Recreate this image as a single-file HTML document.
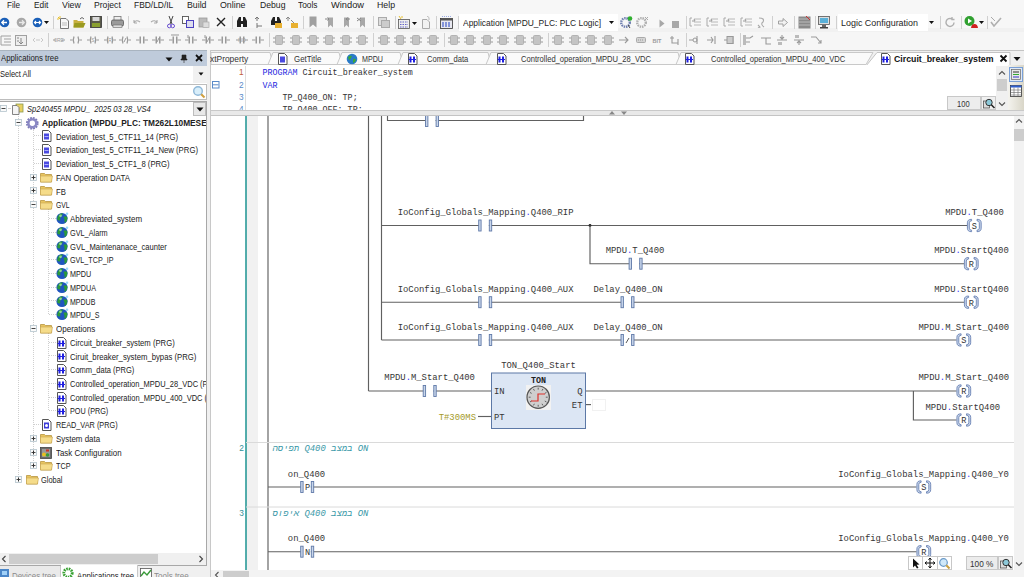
<!DOCTYPE html>
<html><head><meta charset="utf-8">
<style>
*{margin:0;padding:0;box-sizing:border-box}
html,body{width:1024px;height:577px;overflow:hidden;background:#f0f0f0;font-family:"Liberation Sans",sans-serif;font-size:8px;color:#1e1e1e;position:relative}
.a{position:absolute}
.t{position:absolute;white-space:pre;line-height:10px}
.m{font-family:"Liberation Mono",monospace}
.tr{font-size:9px;color:#222}
.it{font-style:italic}
.bd{font-weight:bold}
.tb{font-size:9px;color:#333}
.dc{font-size:8.35px;color:#333}
.mn{top:0px;font-size:9px;color:#222}
</style></head><body>
<!-- MENU -->
<div class="a" style="left:0;top:0;width:1024px;height:12px;background:#f7f7f7"></div>
<span id="mn0" class="t mn" style="left:7.3999999999999995px;transform:scaleX(0.9025);transform-origin:0 50%;">File</span>
<span id="mn1" class="t mn" style="left:34.0px;transform:scaleX(0.9217);transform-origin:0 50%;">Edit</span>
<span id="mn2" class="t mn" style="left:61.6px;transform:scaleX(0.9711);transform-origin:0 50%;">View</span>
<span id="mn3" class="t mn" style="left:93.6px;transform:scaleX(0.9566);transform-origin:0 50%;">Project</span>
<span id="mn4" class="t mn" style="left:134.0px;transform:scaleX(0.9354);transform-origin:0 50%;">FBD/LD/IL</span>
<span id="mn5" class="t mn" style="left:187.1px;transform:scaleX(0.9742);transform-origin:0 50%;">Build</span>
<span id="mn6" class="t mn" style="left:220.4px;transform:scaleX(0.9802);transform-origin:0 50%;">Online</span>
<span id="mn7" class="t mn" style="left:259.5px;transform:scaleX(0.9611);transform-origin:0 50%;">Debug</span>
<span id="mn8" class="t mn" style="left:298.40000000000003px;transform:scaleX(0.9279);transform-origin:0 50%;">Tools</span>
<span id="mn9" class="t mn" style="left:331.1px;transform:scaleX(1.0307);transform-origin:0 50%;">Window</span>
<span id="mn10" class="t mn" style="left:377.20000000000005px;transform:scaleX(0.9722);transform-origin:0 50%;">Help</span>
<!-- TOOLBARS -->
<div class="a" style="left:0;top:12px;width:1024px;height:38px;background:#f0f0f0"></div>
<div class="a" style="left:0;top:12px;width:1024px;height:16px;background:#f7f7f7"></div>
<div class="a" style="left:0;top:28px;width:1024px;height:4px;background:#f1f1f1"></div>
<div class="a" style="left:0;top:32px;width:1024px;height:18px;background:#f6f6f6"></div>
<svg class="a" style="left:-1px;top:17px" width="11" height="11"><circle cx="5.5" cy="5.5" r="4.8" fill="#1a5fb8"/><path d="M8,5.5 H3 M5,3.3 L2.8,5.5 L5,7.7" stroke="#fff" stroke-width="1.3" fill="none"/></svg>
<svg class="a" style="left:16px;top:17px" width="11" height="11"><circle cx="5.5" cy="5.5" r="4.8" fill="#a8a8a8"/><path d="M3,5.5 H8 M6,3.3 L8.2,5.5 L6,7.7" stroke="#e8e8e8" stroke-width="1.3" fill="none"/></svg>
<svg class="a" style="left:32px;top:17px" width="11" height="11"><circle cx="5.5" cy="5.5" r="4.8" fill="#1a5fb8"/><path d="M2.5,5.5 H8.5 M4,4 L2.5,5.5 L4,7 M7,4 L8.5,5.5 L7,7" stroke="#fff" stroke-width="1.2" fill="none"/></svg>
<svg class="a" style="left:44px;top:21px" width="5" height="3"><path d="M0,0 L5,0 L2.5,3 Z" fill="#111"/></svg>
<div class="a" style="left:53px;top:16px;width:1px;height:13px;background:#d0d0d0"></div>
<svg class="a" style="left:57px;top:16px" width="13" height="13"><path d="M3.5,2.5 H9 L11.5,5 V12.5 H3.5 Z" fill="#f8f8f8" stroke="#777" stroke-width="1"/><path d="M5,7 H10 M5,9 H10" stroke="#bbb"/><path d="M1,1 L3,3 M3,0 V2 M0,3 H2" stroke="#e8c030" stroke-width="1"/></svg>
<svg class="a" style="left:73px;top:16px" width="13" height="13"><path d="M0.5,4 H4 L5,5 H10.5 V11.5 H0.5 Z" fill="#c8b040"/><path d="M1.5,7 H12.5 L10.5,11.5 H0.5 Z" fill="#9a9a20"/><path d="M7,3 Q9,0 11,3" stroke="#555" fill="none" stroke-width="0.9"/></svg>
<svg class="a" style="left:90px;top:16px" width="12" height="12"><rect x="0.5" y="0.5" width="11" height="11" fill="#5a5a4a" stroke="#333" stroke-width="0.8"/><rect x="2.5" y="1" width="7" height="4" fill="#d8d8d8"/><rect x="2" y="7" width="8" height="4" fill="#8aa030"/></svg>
<div class="a" style="left:107px;top:16px;width:1px;height:13px;background:#d0d0d0"></div>
<svg class="a" style="left:111px;top:16px" width="13" height="12"><rect x="3" y="0.5" width="7" height="4" fill="#eee" stroke="#777" stroke-width="0.8"/><rect x="0.5" y="4" width="12" height="6" rx="1.5" fill="#9a9a9a" stroke="#555" stroke-width="0.8"/><rect x="2" y="9" width="9" height="2.5" fill="#ddd" stroke="#666" stroke-width="0.6"/></svg>
<div class="a" style="left:128px;top:16px;width:1px;height:13px;background:#d0d0d0"></div>
<svg class="a" style="left:132px;top:18px" width="10" height="9"><path d="M2,5 Q4,1 8,4 M2,5 V2 M2,5 H5" stroke="#aaa" stroke-width="1.1" fill="none"/></svg>
<svg class="a" style="left:149px;top:18px" width="10" height="9"><path d="M8,5 Q6,1 2,4 M8,5 V2 M8,5 H5" stroke="#aaa" stroke-width="1.1" fill="none"/></svg>
<svg class="a" style="left:167px;top:16px" width="8" height="13"><path d="M2,0 L5,8 M6,0 L3,8" stroke="#444" stroke-width="1"/><circle cx="2.3" cy="10" r="1.8" fill="none" stroke="#6a50d0" stroke-width="1"/><circle cx="5.7" cy="10" r="1.8" fill="none" stroke="#6a50d0" stroke-width="1"/></svg>
<svg class="a" style="left:182px;top:16px" width="12" height="12"><rect x="0.5" y="0.5" width="6" height="7" fill="#fff" stroke="#555" stroke-width="0.9"/><rect x="4.5" y="4.5" width="7" height="7" fill="#dde" stroke="#4a40c0" stroke-width="1"/></svg>
<svg class="a" style="left:198px;top:16px" width="12" height="12"><rect x="1" y="2" width="8" height="9" fill="#bbb" stroke="#999" stroke-width="0.8"/><rect x="5" y="6" width="6" height="5.5" fill="#ddd" stroke="#aaa" stroke-width="0.7"/></svg>
<svg class="a" style="left:216px;top:17px" width="10" height="10"><path d="M1,1 L9,9 M9,1 L1,9" stroke="#222" stroke-width="1.4"/></svg>
<div class="a" style="left:232px;top:16px;width:1px;height:13px;background:#d0d0d0"></div>
<svg class="a" style="left:236px;top:16px" width="12" height="12"><path d="M1,5 L3,1 H5 V5 H7 V1 H9 L11,5 V11 H7 V8 H5 V11 H1 Z" fill="#222"/></svg>
<svg class="a" style="left:254px;top:16px" width="10" height="12"><path d="M3,1 V5 M1,3 L3,1 L5,3 M3,7 V10 H8 M2,11 H4" stroke="#777" stroke-width="1" fill="none"/></svg>
<svg class="a" style="left:270px;top:16px" width="13" height="13"><path d="M1,5 L3,1 H5 V5 H7 V1 H9 L11,5 V9 H1 Z" fill="#222"/><rect x="5" y="7" width="7" height="5" fill="#e8b030"/></svg>
<svg class="a" style="left:286px;top:16px" width="13" height="13"><path d="M2,1 V5 M0,3 L2,1 L4,3" stroke="#888" stroke-width="1" fill="none"/><rect x="5" y="7" width="7" height="5" fill="#e8b030"/><path d="M5,4 L8,7" stroke="#888"/></svg>
<div class="a" style="left:303px;top:16px;width:1px;height:13px;background:#d0d0d0"></div>
<svg class="a" style="left:309px;top:16px" width="8" height="12"><path d="M0.5,0.5 H7.5 V11.5 L4,8.5 L0.5,11.5 Z" fill="#a0a0a0"/></svg>
<svg class="a" style="left:325px;top:16px" width="10" height="12"><path d="M3,1.5 V11.5 L5.5,9 L8,11.5 V1.5 Z" fill="#a8a8a8"/><path d="M0,3 H4 M2.5,1.5 L4,3 L2.5,4.5" stroke="#888" fill="none"/></svg>
<svg class="a" style="left:341px;top:16px" width="10" height="12"><path d="M3,1.5 V11.5 L5.5,9 L8,11.5 V1.5 Z" fill="#a8a8a8"/><path d="M9,3 H5 M6.5,1.5 L5,3 L6.5,4.5" stroke="#888" fill="none"/></svg>
<svg class="a" style="left:357px;top:16px" width="10" height="12"><path d="M3,1.5 V11.5 L5.5,9 L8,11.5 V1.5 Z" fill="#a8a8a8"/><path d="M0,2 L4,5 M0,5 L4,2" stroke="#888"/></svg>
<div class="a" style="left:373px;top:16px;width:1px;height:13px;background:#d0d0d0"></div>
<svg class="a" style="left:378px;top:16px" width="12" height="12"><rect x="0.5" y="1.5" width="8" height="8" fill="#ddd" stroke="#aaa"/><rect x="3.5" y="4.5" width="8" height="7" fill="#ccc" stroke="#aaa"/></svg>
<div class="a" style="left:395px;top:16px;width:1px;height:13px;background:#d0d0d0"></div>
<svg class="a" style="left:398px;top:16px" width="12" height="13"><rect x="0.5" y="3.5" width="11" height="9" fill="#eee" stroke="#555" stroke-width="0.8"/><path d="M2,6 H10 M2,8.5 H10 M2,11 H10" stroke="#4040c0" stroke-width="0.8" stroke-dasharray="1.5,1"/><path d="M1,0 L3,3 M4,0 L4,2" stroke="#e8c030"/></svg>
<svg class="a" style="left:412px;top:22px" width="5" height="3"><path d="M0,0 L5,0 L2.5,3 Z" fill="#111"/></svg>
<svg class="a" style="left:421px;top:16px" width="10" height="13"><path d="M1.5,3.5 H6 L8.5,6 V12.5 H1.5 Z" fill="#f2f2f2" stroke="#aaa"/><path d="M6,0 Q9,1 8,4" stroke="#bbb" fill="none"/></svg>
<div class="a" style="left:436px;top:16px;width:1px;height:13px;background:#d0d0d0"></div>
<svg class="a" style="left:440px;top:16px" width="13" height="13"><rect x="0.5" y="2.5" width="12" height="10" fill="#e8e8f0" stroke="#333" stroke-width="0.8"/><rect x="0.5" y="2.5" width="12" height="2" fill="#555"/><path d="M3,6 V11 M6,6 V11 M9,6 V11" stroke="#2040c0" stroke-width="1"/><path d="M2,0 H11" stroke="#4060d0" stroke-dasharray="1,1"/></svg>
<div class="a" style="left:458px;top:16px;width:1px;height:13px;background:#d0d0d0"></div>
<div class="a" style="left:459px;top:14px;width:159px;height:17px;background:#fff"></div>
<span id="cb1" class="t" style="left:463.1px;top:17.5px;font-size:9.4px;color:#1e1e1e;transform:scaleX(0.9008);transform-origin:0 50%;">Application [MPDU_PLC: PLC Logic]</span>
<svg class="a" style="left:609px;top:21px" width="5" height="3"><path d="M0,0 L5,0 L2.5,3 Z" fill="#111"/></svg>
<svg class="a" style="left:620px;top:16px" width="13" height="13"><circle cx="5.5" cy="6.5" r="4.3" fill="none" stroke="#7080b0" stroke-width="2.4" stroke-dasharray="1.5,0.8"/><circle cx="10" cy="2.5" r="2.3" fill="#30b030"/><path d="M8,9 L10,12" stroke="#444"/></svg>
<svg class="a" style="left:636px;top:16px" width="13" height="13"><circle cx="5.5" cy="6.5" r="4.3" fill="none" stroke="#b0b0b0" stroke-width="2.4" stroke-dasharray="1.5,0.8"/><path d="M9,1 L12,4 M12,1 L9,4" stroke="#aaa"/></svg>
<svg class="a" style="left:659px;top:19px" width="6" height="9"><path d="M0.5,0.5 L5.5,4.5 L0.5,8.5 Z" fill="#a8a8a8"/></svg>
<svg class="a" style="left:672px;top:21px" width="8" height="8"><rect x="0" y="0" width="7" height="7" fill="#a8a8a8"/></svg>
<div class="a" style="left:686px;top:16px;width:1px;height:13px;background:#d0d0d0"></div>
<svg class="a" style="left:689px;top:16px" width="13" height="12"><path d="M1,2 V10 H3 M1,2 H3" stroke="#aaa" fill="none"/><path d="M5,3 H12 M5,6 H12 M5,9 H12" stroke="#b0b0b0" stroke-width="0.9"/><path d="M3,5 L6,5 L5,3" stroke="#999" fill="none"/></svg>
<svg class="a" style="left:706px;top:16px" width="13" height="12"><path d="M1,2 V10 H3 M1,2 H3" stroke="#aaa" fill="none"/><path d="M5,3 H12 M5,6 H12 M5,9 H12" stroke="#b0b0b0" stroke-width="0.9"/><path d="M3,5 L6,5 L5,3" stroke="#999" fill="none"/></svg>
<svg class="a" style="left:723px;top:16px" width="13" height="12"><path d="M1,2 V10 H3 M1,2 H3" stroke="#aaa" fill="none"/><path d="M5,3 H12 M5,6 H12 M5,9 H12" stroke="#b0b0b0" stroke-width="0.9"/><path d="M3,5 L6,5 L5,3" stroke="#999" fill="none"/></svg>
<svg class="a" style="left:740px;top:16px" width="13" height="12"><path d="M1,2 V10 H3 M1,2 H3" stroke="#aaa" fill="none"/><path d="M5,3 H12 M5,6 H12 M5,9 H12" stroke="#b0b0b0" stroke-width="0.9"/><path d="M3,5 L6,5 L5,3" stroke="#999" fill="none"/></svg>
<svg class="a" style="left:757px;top:16px" width="10" height="12"><path d="M2,2 Q8,2 6,6 Q3,8 7,11 M1,9 L3,11 L1,12" stroke="#aaa" stroke-width="1.1" fill="none"/></svg>
<div class="a" style="left:772px;top:16px;width:1px;height:13px;background:#d0d0d0"></div>
<svg class="a" style="left:778px;top:18px" width="10" height="9"><path d="M0.5,3 H5 V0.5 L9.5,4.5 L5,8.5 V6 H0.5 Z" fill="#f2f2f2" stroke="#999" stroke-width="0.9"/></svg>
<div class="a" style="left:794px;top:16px;width:1px;height:13px;background:#d0d0d0"></div>
<svg class="a" style="left:798px;top:16px" width="13" height="13"><rect x="0.5" y="0.5" width="12" height="12" fill="#8a8a8a"/><path d="M1,3 H12 M1,6 H12 M1,9 H12" stroke="#c8c8c8" stroke-width="0.8"/><path d="M8,0 L12,4" stroke="#c33"/></svg>
<div class="a" style="left:815px;top:16px;width:1px;height:13px;background:#d0d0d0"></div>
<svg class="a" style="left:818px;top:16px" width="13" height="13"><rect x="0.5" y="0.5" width="11" height="8" fill="#ddd" stroke="#555" stroke-width="0.8"/><rect x="2" y="2" width="8" height="5" fill="#5ab0d8"/><rect x="4" y="9" width="4" height="2" fill="#666"/><rect x="2" y="11" width="8" height="1.5" fill="#444"/></svg>
<div class="a" style="left:836px;top:16px;width:1px;height:13px;background:#d0d0d0"></div>
<div class="a" style="left:838px;top:14px;width:90px;height:17px;background:#fff"></div>
<span id="cb2" class="t" style="left:840.9px;top:17.5px;font-size:9.4px;color:#1e1e1e;transform:scaleX(0.9530);transform-origin:0 50%;">Logic Configuration</span>
<svg class="a" style="left:929px;top:21px" width="5" height="3"><path d="M0,0 L5,0 L2.5,3 Z" fill="#111"/></svg>
<div class="a" style="left:940px;top:16px;width:1px;height:13px;background:#d0d0d0"></div>
<svg class="a" style="left:944px;top:16px" width="13" height="13"><path d="M10,6.5 A4,4 0 1 1 8,3 M8,1 V3.5 H10.5" stroke="#b0b0b0" stroke-width="1.4" fill="none"/></svg>
<div class="a" style="left:961px;top:16px;width:1px;height:13px;background:#d0d0d0"></div>
<svg class="a" style="left:964px;top:15px" width="15" height="14"><circle cx="5.5" cy="6" r="5" fill="#30a030"/><path d="M4,3.5 L8,6 L4,8.5 Z" fill="#fff"/><path d="M7,13 Q7.5,9 10.5,9 Q13.5,9 14,13 Z" fill="#d02020"/></svg>
<svg class="a" style="left:979px;top:21px" width="5" height="3"><path d="M0,0 L5,0 L2.5,3 Z" fill="#111"/></svg>
<div class="a" style="left:987px;top:16px;width:1px;height:13px;background:#d0d0d0"></div>
<svg class="a" style="left:990px;top:16px" width="12" height="12"><path d="M1,6 L4,10 L11,2" stroke="#b0b0b0" stroke-width="1.6" fill="none"/><path d="M1,1 L5,5" stroke="#aaa"/></svg>
<svg class="a" style="left:0px;top:34px" width="12" height="12"><path d="M1,2 H11 M4,5 H11 M4,8 H11 M1,11 H11 M1,2 V11" stroke="#a0a0a0" stroke-width="1" fill="none"/></svg>
<svg class="a" style="left:15px;top:34px" width="12" height="12"><rect x="0.5" y="1.5" width="11" height="10" fill="#eee" stroke="#a0a0a0"/><path d="M6,4 V10 M4,8 L6,10 L8,8 M2,4 H4 M2,7 H4" stroke="#888" fill="none"/></svg>
<svg class="a" style="left:32px;top:34px" width="12" height="12"><path d="M1,6 L3,4 M1,6 L3,8 M11,6 L9,4 M11,6 L9,8 M4,6 H8" stroke="#c8c8c8" stroke-width="1" fill="none"/></svg>
<div class="a" style="left:48px;top:33px;width:1px;height:14px;background:#d0d0d0"></div>
<svg class="a" style="left:53px;top:34px" width="12" height="12"><path d="M0,6 H3 M9,6 H12" stroke="#9a9a9a"/><text x="6" y="8" font-size="5" text-anchor="middle" fill="#9a9a9a" font-family="Liberation Sans">0RE</text></svg>
<svg class="a" style="left:69.5px;top:34px" width="12" height="12"><path d="M0,6 H2.5 M9.5,6 H12" stroke="#9a9a9a" stroke-width="1"/><path d="M4,2.5 Q2.5,6 4,9.5 M8,2.5 Q9.5,6 8,9.5" stroke="#9a9a9a" stroke-width="1.3" fill="none"/></svg>
<svg class="a" style="left:86.5px;top:34px" width="12" height="12"><path d="M0,6 H2.5 M9.5,6 H12" stroke="#9a9a9a" stroke-width="1"/><path d="M4,2.5 Q2.5,6 4,9.5 M8,2.5 Q9.5,6 8,9.5" stroke="#9a9a9a" stroke-width="1.3" fill="none"/><text x="6" y="8" font-size="5" text-anchor="middle" fill="#999" font-family="Liberation Sans">S</text></svg>
<svg class="a" style="left:103.5px;top:34px" width="12" height="12"><path d="M0,6 H2.5 M9.5,6 H12" stroke="#9a9a9a" stroke-width="1"/><path d="M4,2.5 Q2.5,6 4,9.5 M8,2.5 Q9.5,6 8,9.5" stroke="#9a9a9a" stroke-width="1.3" fill="none"/><text x="6" y="8" font-size="5" text-anchor="middle" fill="#999" font-family="Liberation Sans">R</text></svg>
<svg class="a" style="left:119px;top:34px" width="12" height="12"><path d="M0,6 H2.5 M9.5,6 H12" stroke="#9a9a9a" stroke-width="1"/><path d="M4,2.5 Q2.5,6 4,9.5 M8,2.5 Q9.5,6 8,9.5" stroke="#9a9a9a" stroke-width="1.3" fill="none"/><path d="M5,8 L7,4" stroke="#999"/></svg>
<svg class="a" style="left:136px;top:34px" width="12" height="12"><path d="M0,6 H3.5 M8.5,6 H12" stroke="#9a9a9a" stroke-width="1"/><rect x="3.5" y="2.5" width="1.5" height="7" fill="#9a9a9a"/><rect x="7" y="2.5" width="1.5" height="7" fill="#9a9a9a"/></svg>
<svg class="a" style="left:152px;top:34px" width="12" height="12"><path d="M0,6 H3.5 M8.5,6 H12" stroke="#9a9a9a" stroke-width="1"/><rect x="3.5" y="2.5" width="1.5" height="7" fill="#9a9a9a"/><rect x="7" y="2.5" width="1.5" height="7" fill="#9a9a9a"/><path d="M5,8 L7,4" stroke="#999"/></svg>
<svg class="a" style="left:169px;top:34px" width="12" height="12"><path d="M0,6 H3.5 M8.5,6 H12" stroke="#9a9a9a" stroke-width="1"/><rect x="3.5" y="2.5" width="1.5" height="7" fill="#9a9a9a"/><rect x="7" y="2.5" width="1.5" height="7" fill="#9a9a9a"/><path d="M2,1 H10" stroke="#999"/></svg>
<svg class="a" style="left:185px;top:34px" width="12" height="12"><path d="M0,6 H3.5 M8.5,6 H12" stroke="#9a9a9a" stroke-width="1"/><rect x="3.5" y="2.5" width="1.5" height="7" fill="#9a9a9a"/><rect x="7" y="2.5" width="1.5" height="7" fill="#9a9a9a"/><path d="M3,1 V4" stroke="#999"/></svg>
<svg class="a" style="left:201.5px;top:34px" width="12" height="12"><path d="M0,6 H3.5 M8.5,6 H12" stroke="#9a9a9a" stroke-width="1"/><rect x="3.5" y="2.5" width="1.5" height="7" fill="#9a9a9a"/><rect x="7" y="2.5" width="1.5" height="7" fill="#9a9a9a"/><path d="M5,8 L7,4 M3,1 V4" stroke="#999"/></svg>
<svg class="a" style="left:217.5px;top:34px" width="12" height="12"><path d="M0,6 H3.5 M8.5,6 H12" stroke="#9a9a9a" stroke-width="1"/><rect x="3.5" y="2.5" width="1.5" height="7" fill="#9a9a9a"/><rect x="7" y="2.5" width="1.5" height="7" fill="#9a9a9a"/></svg>
<svg class="a" style="left:235.5px;top:34px" width="12" height="12"><path d="M0,6 H3.5 M8.5,6 H12" stroke="#9a9a9a" stroke-width="1"/><rect x="3.5" y="2.5" width="1.5" height="7" fill="#9a9a9a"/><rect x="7" y="2.5" width="1.5" height="7" fill="#9a9a9a"/><text x="6" y="8" font-size="5" text-anchor="middle" fill="#999" font-family="Liberation Sans">NO</text></svg>
<svg class="a" style="left:252px;top:34px" width="12" height="12"><path d="M0,6 H3.5 M8.5,6 H12" stroke="#9a9a9a" stroke-width="1"/><rect x="3.5" y="2.5" width="1.5" height="7" fill="#9a9a9a"/><rect x="7" y="2.5" width="1.5" height="7" fill="#9a9a9a"/></svg>
<svg class="a" style="left:273px;top:34px" width="12" height="12"><path d="M0,4 H2.5 M0,8 H2.5 M9.5,4 H12 M9.5,8 H12" stroke="#9a9a9a" stroke-width="1"/><rect x="2.5" y="1.5" width="7" height="9" rx="1" fill="#c4c4c4" stroke="#a8a8a8" stroke-width="0.8"/></svg>
<svg class="a" style="left:290px;top:34px" width="12" height="12"><path d="M0,4 H2.5 M0,8 H2.5 M9.5,4 H12 M9.5,8 H12" stroke="#9a9a9a" stroke-width="1"/><rect x="2.5" y="1.5" width="7" height="9" rx="1" fill="#c4c4c4" stroke="#a8a8a8" stroke-width="0.8"/></svg>
<svg class="a" style="left:307px;top:34px" width="12" height="12"><path d="M0,4 H2.5 M0,8 H2.5 M9.5,4 H12 M9.5,8 H12" stroke="#9a9a9a" stroke-width="1"/><rect x="2.5" y="1.5" width="7" height="9" rx="1" fill="#c4c4c4" stroke="#a8a8a8" stroke-width="0.8"/></svg>
<svg class="a" style="left:323px;top:34px" width="12" height="12"><path d="M0,4 H2.5 M0,8 H2.5 M9.5,4 H12 M9.5,8 H12" stroke="#9a9a9a" stroke-width="1"/><rect x="2.5" y="1.5" width="7" height="9" rx="1" fill="#c4c4c4" stroke="#a8a8a8" stroke-width="0.8"/></svg>
<svg class="a" style="left:340px;top:34px" width="12" height="12"><path d="M0,4 H2.5 M0,8 H2.5 M9.5,4 H12 M9.5,8 H12" stroke="#9a9a9a" stroke-width="1"/><rect x="2.5" y="1.5" width="7" height="9" rx="1" fill="#c4c4c4" stroke="#a8a8a8" stroke-width="0.8"/></svg>
<svg class="a" style="left:356px;top:34px" width="12" height="12"><path d="M0,4 H2.5 M0,8 H2.5 M9.5,4 H12 M9.5,8 H12" stroke="#9a9a9a" stroke-width="1"/><rect x="2.5" y="1.5" width="7" height="9" rx="1" fill="#c4c4c4" stroke="#a8a8a8" stroke-width="0.8"/></svg>
<svg class="a" style="left:378px;top:34px" width="12" height="12"><path d="M0,4 H2.5 M0,8 H2.5 M9.5,4 H12 M9.5,8 H12" stroke="#9a9a9a" stroke-width="1"/><rect x="2.5" y="1.5" width="7" height="9" rx="1" fill="#c4c4c4" stroke="#a8a8a8" stroke-width="0.8"/></svg>
<svg class="a" style="left:394px;top:34px" width="12" height="12"><path d="M0,4 H2.5 M0,8 H2.5 M9.5,4 H12 M9.5,8 H12" stroke="#9a9a9a" stroke-width="1"/><rect x="2.5" y="1.5" width="7" height="9" rx="1" fill="#c4c4c4" stroke="#a8a8a8" stroke-width="0.8"/></svg>
<svg class="a" style="left:410px;top:34px" width="12" height="12"><path d="M0,4 H2.5 M0,8 H2.5 M9.5,4 H12 M9.5,8 H12" stroke="#9a9a9a" stroke-width="1"/><rect x="2.5" y="1.5" width="7" height="9" rx="1" fill="#c4c4c4" stroke="#a8a8a8" stroke-width="0.8"/></svg>
<svg class="a" style="left:427px;top:34px" width="12" height="12"><path d="M0,4 H2.5 M0,8 H2.5 M9.5,4 H12 M9.5,8 H12" stroke="#9a9a9a" stroke-width="1"/><rect x="2.5" y="1.5" width="7" height="9" rx="1" fill="#c4c4c4" stroke="#a8a8a8" stroke-width="0.8"/></svg>
<svg class="a" style="left:448px;top:34px" width="12" height="12"><path d="M0,4 H2.5 M0,8 H2.5 M9.5,4 H12 M9.5,8 H12" stroke="#9a9a9a" stroke-width="1"/><rect x="2.5" y="1.5" width="7" height="9" rx="1" fill="#c4c4c4" stroke="#a8a8a8" stroke-width="0.8"/></svg>
<svg class="a" style="left:464px;top:34px" width="12" height="12"><path d="M0,4 H2.5 M0,8 H2.5 M9.5,4 H12 M9.5,8 H12" stroke="#9a9a9a" stroke-width="1"/><rect x="2.5" y="1.5" width="7" height="9" rx="1" fill="#c4c4c4" stroke="#a8a8a8" stroke-width="0.8"/></svg>
<svg class="a" style="left:481px;top:34px" width="12" height="12"><path d="M0,4 H2.5 M0,8 H2.5 M9.5,4 H12 M9.5,8 H12" stroke="#9a9a9a" stroke-width="1"/><rect x="2.5" y="1.5" width="7" height="9" rx="1" fill="#c4c4c4" stroke="#a8a8a8" stroke-width="0.8"/></svg>
<svg class="a" style="left:497px;top:34px" width="12" height="12"><path d="M0,4 H2.5 M0,8 H2.5 M9.5,4 H12 M9.5,8 H12" stroke="#9a9a9a" stroke-width="1"/><rect x="2.5" y="1.5" width="7" height="9" rx="1" fill="#c4c4c4" stroke="#a8a8a8" stroke-width="0.8"/></svg>
<svg class="a" style="left:514px;top:34px" width="12" height="12"><path d="M0,4 H2.5 M0,8 H2.5 M9.5,4 H12 M9.5,8 H12" stroke="#9a9a9a" stroke-width="1"/><rect x="2.5" y="1.5" width="7" height="9" rx="1" fill="#c4c4c4" stroke="#a8a8a8" stroke-width="0.8"/></svg>
<svg class="a" style="left:531px;top:34px" width="12" height="12"><path d="M0,4 H2.5 M0,8 H2.5 M9.5,4 H12 M9.5,8 H12" stroke="#9a9a9a" stroke-width="1"/><rect x="2.5" y="1.5" width="7" height="9" rx="1" fill="#c4c4c4" stroke="#a8a8a8" stroke-width="0.8"/></svg>
<svg class="a" style="left:552px;top:34px" width="12" height="12"><path d="M0,4 H2.5 M0,8 H2.5 M9.5,4 H12 M9.5,8 H12" stroke="#9a9a9a" stroke-width="1"/><rect x="2.5" y="1.5" width="7" height="9" rx="1" fill="#c4c4c4" stroke="#a8a8a8" stroke-width="0.8"/></svg>
<svg class="a" style="left:569px;top:34px" width="12" height="12"><path d="M0,4 H2.5 M0,8 H2.5 M9.5,4 H12 M9.5,8 H12" stroke="#9a9a9a" stroke-width="1"/><rect x="2.5" y="1.5" width="7" height="9" rx="1" fill="#c4c4c4" stroke="#a8a8a8" stroke-width="0.8"/></svg>
<svg class="a" style="left:585px;top:34px" width="12" height="12"><path d="M0,4 H2.5 M0,8 H2.5 M9.5,4 H12 M9.5,8 H12" stroke="#9a9a9a" stroke-width="1"/><rect x="2.5" y="1.5" width="7" height="9" rx="1" fill="#c4c4c4" stroke="#a8a8a8" stroke-width="0.8"/></svg>
<svg class="a" style="left:602px;top:34px" width="12" height="12"><path d="M0,4 H2.5 M0,8 H2.5 M9.5,4 H12 M9.5,8 H12" stroke="#9a9a9a" stroke-width="1"/><rect x="2.5" y="1.5" width="7" height="9" rx="1" fill="#c4c4c4" stroke="#a8a8a8" stroke-width="0.8"/></svg>
<svg class="a" style="left:618px;top:34px" width="12" height="12"><path d="M1,6 H10 M7,3 L10,6 L7,9" stroke="#9a9a9a" stroke-width="1.1" fill="none"/></svg>
<svg class="a" style="left:635px;top:34px" width="12" height="12"><rect x="1.5" y="3.5" width="9" height="5" rx="1" fill="#d4d4d4" stroke="#aaa"/><path d="M3,6 H9" stroke="#999" stroke-dasharray="1,1"/></svg>
<svg class="a" style="left:651px;top:34px" width="13" height="12"><text x="6" y="8.5" font-size="5.5" text-anchor="middle" fill="#999" font-family="Liberation Sans" font-weight="bold">BIT</text></svg>
<svg class="a" style="left:669px;top:34px" width="12" height="12"><path d="M3,2 V9 H9 M9,5 V11 M1,4 H5" stroke="#9a9a9a" stroke-width="1.1" fill="none"/></svg>
<svg class="a" style="left:689px;top:34px" width="12" height="12"><path d="M0,6 H4 M8,2 V10" stroke="#9a9a9a" stroke-width="1.1"/><circle cx="6" cy="6" r="2" fill="none" stroke="#9a9a9a"/></svg>
<svg class="a" style="left:707px;top:34px" width="12" height="12"><path d="M0,6 H6 M4,3 L6,6 L4,9 M8,2 V10" stroke="#9a9a9a" stroke-width="1.1" fill="none"/></svg>
<svg class="a" style="left:724px;top:34px" width="12" height="12"><path d="M0,6 H3 M9,2 V10" stroke="#9a9a9a"/><rect x="3" y="2.5" width="6" height="7" fill="#ccc" stroke="#999"/></svg>
<svg class="a" style="left:742px;top:34px" width="12" height="12"><rect x="1" y="1" width="3" height="10" fill="#bbb"/><path d="M4,4 H8 L11,2 M4,8 H8" stroke="#9a9a9a" stroke-width="1.1" fill="none"/></svg>
<svg class="a" style="left:760px;top:34px" width="12" height="12"><path d="M1,4 H11 M6,4 V10 H11" stroke="#9a9a9a" stroke-width="1.1" fill="none"/></svg>
<svg class="a" style="left:776px;top:34px" width="12" height="12"><path d="M1,6 H11 M6,1 V5 M4,3 L6,5 L8,3" stroke="#9a9a9a" stroke-width="1.1" fill="none"/><rect x="2" y="8" width="4" height="3" fill="#bbb"/></svg>
<svg class="a" style="left:793px;top:34px" width="12" height="12"><path d="M1,6 H11 M6,11 V7 M4,9 L6,7 L8,9" stroke="#9a9a9a" stroke-width="1.1" fill="none"/><rect x="2" y="1" width="4" height="3" fill="#bbb"/></svg>
<svg class="a" style="left:810px;top:34px" width="12" height="12"><path d="M1,3 H6 L11,9 M8,9 H11 V6" stroke="#9a9a9a" stroke-width="1.1" fill="none"/></svg>
<div class="a" style="left:269px;top:33px;width:1px;height:14px;background:#d0d0d0"></div>
<div class="a" style="left:373px;top:33px;width:1px;height:14px;background:#d0d0d0"></div>
<div class="a" style="left:444px;top:33px;width:1px;height:14px;background:#d0d0d0"></div>
<div class="a" style="left:548px;top:33px;width:1px;height:14px;background:#d0d0d0"></div>
<div class="a" style="left:686px;top:33px;width:1px;height:14px;background:#d0d0d0"></div>
<div class="a" style="left:740px;top:33px;width:1px;height:14px;background:#d0d0d0"></div>

<!-- LEFT PANEL -->
<div class="a" style="left:0;top:50px;width:207px;height:16px;background:#bfcbdb;border-top:1px solid #a9b4c0"></div>
<span id="hdr" class="t" style="left:0.6px;top:53px;font-size:9px;color:#222;transform:scaleX(0.8641);transform-origin:0 50%;">Applications tree</span>
<svg class="a" style="left:165px;top:57px" width="8" height="5"><path d="M0.5,0.5 L7.5,0.5 L4,4.5 Z" fill="#111"/></svg>
<svg class="a" style="left:180px;top:54px" width="8" height="9"><path d="M2,1 H6 V5 H7 V6 H1 V5 H2 Z M4,6 V9" fill="#222" stroke="#222" stroke-width="0.6"/></svg>
<svg class="a" style="left:195px;top:54px" width="8" height="8"><path d="M1,1 L7,7 M7,1 L1,7" stroke="#111" stroke-width="1.8"/></svg>
<div class="a" style="left:0;top:66px;width:207px;height:18px;background:#fff"></div>
<span id="sela" class="t" style="left:-0.5px;top:69px;font-size:9px;color:#222;transform:scaleX(0.8371);transform-origin:0 50%;">Select All</span>
<div class="a" style="left:193px;top:66px;width:14px;height:17px;background:#f1f1f1"></div>
<svg class="a" style="left:198px;top:72px" width="6" height="4"><path d="M0.5,0.5 L5.5,0.5 L3,3.5 Z" fill="#111"/></svg>
<div class="a" style="left:0;top:84px;width:207px;height:16px;background:#fff;border:1px solid #bdbdbd;border-left:none"></div>
<svg class="a" style="left:192px;top:85px" width="14" height="14"><circle cx="6" cy="6" r="4.3" fill="#d8eefa" stroke="#8fb8d8" stroke-width="1.4"/><line x1="9.2" y1="9.2" x2="12.5" y2="12.5" stroke="#d0a040" stroke-width="2"/></svg>
<div class="a" style="left:0;top:101px;width:207px;height:465px;background:#fff;border:1px solid #a8a8a8;border-left:none"></div>
<div class="a" style="left:0;top:102px;width:206px;height:451px;overflow:hidden">
<div class="a" style="left:0;top:-102px;width:206px;height:577px">
<div class="a" style="left:18px;top:112px;width:1px;height:367px;border-left:1px dotted #cfcfcf"></div>
<div class="a" style="left:33px;top:127px;width:1px;height:338px;border-left:1px dotted #cfcfcf"></div>
<div class="a" style="left:48px;top:209px;width:1px;height:105px;border-left:1px dotted #cfcfcf"></div>
<div class="a" style="left:48px;top:333px;width:1px;height:77px;border-left:1px dotted #cfcfcf"></div>
<div class="a" style="left:34px;top:135px;width:7px;height:1px;border-top:1px dotted #cfcfcf"></div>
<div class="a" style="left:34px;top:149px;width:7px;height:1px;border-top:1px dotted #cfcfcf"></div>
<div class="a" style="left:34px;top:163px;width:7px;height:1px;border-top:1px dotted #cfcfcf"></div>
<div class="a" style="left:34px;top:424px;width:7px;height:1px;border-top:1px dotted #cfcfcf"></div>
<div class="a" style="left:49px;top:218px;width:7px;height:1px;border-top:1px dotted #cfcfcf"></div>
<div class="a" style="left:49px;top:232px;width:7px;height:1px;border-top:1px dotted #cfcfcf"></div>
<div class="a" style="left:49px;top:245px;width:7px;height:1px;border-top:1px dotted #cfcfcf"></div>
<div class="a" style="left:49px;top:259px;width:7px;height:1px;border-top:1px dotted #cfcfcf"></div>
<div class="a" style="left:49px;top:273px;width:7px;height:1px;border-top:1px dotted #cfcfcf"></div>
<div class="a" style="left:49px;top:287px;width:7px;height:1px;border-top:1px dotted #cfcfcf"></div>
<div class="a" style="left:49px;top:300px;width:7px;height:1px;border-top:1px dotted #cfcfcf"></div>
<div class="a" style="left:49px;top:314px;width:7px;height:1px;border-top:1px dotted #cfcfcf"></div>
<div class="a" style="left:49px;top:342px;width:7px;height:1px;border-top:1px dotted #cfcfcf"></div>
<div class="a" style="left:49px;top:355px;width:7px;height:1px;border-top:1px dotted #cfcfcf"></div>
<div class="a" style="left:49px;top:369px;width:7px;height:1px;border-top:1px dotted #cfcfcf"></div>
<div class="a" style="left:49px;top:383px;width:7px;height:1px;border-top:1px dotted #cfcfcf"></div>
<div class="a" style="left:49px;top:397px;width:7px;height:1px;border-top:1px dotted #cfcfcf"></div>
<div class="a" style="left:49px;top:410px;width:7px;height:1px;border-top:1px dotted #cfcfcf"></div>
<div class="a" style="left:8px;top:108px;width:2px;height:1px;border-top:1px dotted #cfcfcf"></div>
<svg class="a" style="left:0.0px;top:105.0px" width="7" height="7"><rect x="0.5" y="0.5" width="6" height="6" fill="#fafafa" stroke="#b4c4cc" stroke-width="0.8"/><line x1="1.5" y1="3.5" x2="5.5" y2="3.5" stroke="#444" stroke-width="1"/></svg>
<svg class="a" style="left:10.5px;top:103.0px" width="13" height="12"><rect x="5" y="1" width="7" height="8" fill="#e8d060" stroke="#8a9a50" stroke-width="0.8"/><path d="M1.5,2.5 H6 L8,4.5 V11.5 H1.5 Z" fill="#f4f4f4" stroke="#777" stroke-width="0.9"/></svg>
<span id="tr0" class="t tr it" style="left:27.1px;top:104.20px;transform:scaleX(0.8416);transform-origin:0 50%;">Sp240455 MPDU_  2025 03 28_VS4</span>
<svg class="a" style="left:15.0px;top:118.74px" width="7" height="7"><rect x="0.5" y="0.5" width="6" height="6" fill="#fafafa" stroke="#b4c4cc" stroke-width="0.8"/><line x1="1.5" y1="3.5" x2="5.5" y2="3.5" stroke="#444" stroke-width="1"/></svg>
<svg class="a" style="left:26px;top:116.74px" width="13" height="13"><circle cx="6.3" cy="6.3" r="4.8" fill="none" stroke="#7c7ab8" stroke-width="3" stroke-dasharray="1.7,0.8"/><circle cx="6.3" cy="6.3" r="3.9" fill="none" stroke="#8a88c4" stroke-width="2.4"/><circle cx="6.3" cy="6.3" r="2.2" fill="#fff"/></svg>
<span id="tr1" class="t tr bd" style="left:42.1px;top:117.94px;transform:scaleX(0.9225);transform-origin:0 50%;">Application (MPDU_PLC: TM262L10MESE8</span>
<svg class="a" style="left:41px;top:130.48px" width="11" height="12"><path d="M1.5,0.5 H7.5 L10,3 V11.5 H1.5 Z" fill="#fff" stroke="#555" stroke-width="1"/><rect x="3" y="3.5" width="5" height="6" fill="#4a4ae0"/><line x1="3.5" y1="6.5" x2="7.5" y2="6.5" stroke="#c8c8ff" stroke-width="0.8"/></svg>
<span id="tr2" class="t tr " style="left:55.6px;top:131.68px;transform:scaleX(0.8597);transform-origin:0 50%;">Deviation_test_5_CTF11_14 (PRG)</span>
<svg class="a" style="left:41px;top:144.22px" width="11" height="12"><path d="M1.5,0.5 H7.5 L10,3 V11.5 H1.5 Z" fill="#fff" stroke="#555" stroke-width="1"/><rect x="3" y="3.5" width="5" height="6" fill="#4a4ae0"/><line x1="3.5" y1="6.5" x2="7.5" y2="6.5" stroke="#c8c8ff" stroke-width="0.8"/></svg>
<span id="tr3" class="t tr " style="left:55.6px;top:145.42px;transform:scaleX(0.8610);transform-origin:0 50%;">Deviation_test_5_CTF11_14_New (PRG)</span>
<svg class="a" style="left:41px;top:157.96px" width="11" height="12"><path d="M1.5,0.5 H7.5 L10,3 V11.5 H1.5 Z" fill="#fff" stroke="#555" stroke-width="1"/><rect x="3" y="3.5" width="5" height="6" fill="#4a4ae0"/><line x1="3.5" y1="6.5" x2="7.5" y2="6.5" stroke="#c8c8ff" stroke-width="0.8"/></svg>
<span id="tr4" class="t tr " style="left:55.6px;top:159.16px;transform:scaleX(0.8577);transform-origin:0 50%;">Deviation_test_5_CTF1_8 (PRG)</span>
<svg class="a" style="left:29.5px;top:173.7px" width="7" height="7"><rect x="0.5" y="0.5" width="6" height="6" fill="#fafafa" stroke="#b4c4cc" stroke-width="0.8"/><line x1="1.5" y1="3.5" x2="5.5" y2="3.5" stroke="#444" stroke-width="1"/><line x1="3.5" y1="1.5" x2="3.5" y2="5.5" stroke="#333" stroke-width="1"/></svg>
<svg class="a" style="left:40px;top:171.7px" width="13" height="11"><path d="M0.5,1.5 H4.5 L5.5,2.5 H11.5 V10 H0.5 Z" fill="#e8c560" stroke="#b89540" stroke-width="0.8"/><path d="M0.5,4 H12.5 L11.5,10 H0.5 Z" fill="#f5dc8a" stroke="#c8a550" stroke-width="0.6"/></svg>
<span id="tr5" class="t tr " style="left:55.6px;top:172.90px;transform:scaleX(0.8725);transform-origin:0 50%;">FAN Operation DATA</span>
<svg class="a" style="left:29.5px;top:187.44px" width="7" height="7"><rect x="0.5" y="0.5" width="6" height="6" fill="#fafafa" stroke="#b4c4cc" stroke-width="0.8"/><line x1="1.5" y1="3.5" x2="5.5" y2="3.5" stroke="#444" stroke-width="1"/><line x1="3.5" y1="1.5" x2="3.5" y2="5.5" stroke="#333" stroke-width="1"/></svg>
<svg class="a" style="left:40px;top:185.44px" width="13" height="11"><path d="M0.5,1.5 H4.5 L5.5,2.5 H11.5 V10 H0.5 Z" fill="#e8c560" stroke="#b89540" stroke-width="0.8"/><path d="M0.5,4 H12.5 L11.5,10 H0.5 Z" fill="#f5dc8a" stroke="#c8a550" stroke-width="0.6"/></svg>
<span id="tr6" class="t tr " style="left:55.6px;top:186.64px;transform:scaleX(0.8597);transform-origin:0 50%;">FB</span>
<svg class="a" style="left:29.5px;top:201.18px" width="7" height="7"><rect x="0.5" y="0.5" width="6" height="6" fill="#fafafa" stroke="#b4c4cc" stroke-width="0.8"/><line x1="1.5" y1="3.5" x2="5.5" y2="3.5" stroke="#444" stroke-width="1"/></svg>
<svg class="a" style="left:40px;top:199.18px" width="13" height="11"><path d="M0.5,1.5 H4.5 L5.5,2.5 H11.5 V10 H0.5 Z" fill="#e8c560" stroke="#b89540" stroke-width="0.8"/><path d="M0.5,4 H12.5 L11.5,10 H0.5 Z" fill="#f5dc8a" stroke="#c8a550" stroke-width="0.6"/></svg>
<span id="tr7" class="t tr " style="left:55.6px;top:200.38px;transform:scaleX(0.7549);transform-origin:0 50%;">GVL</span>
<svg class="a" style="left:55.5px;top:212.12px" width="13" height="13"><circle cx="6" cy="6.5" r="5.6" fill="#1f55c0"/><path d="M1.5,5 Q3,1.5 6.5,1.3 Q7,3.5 5,4.5 Q3.5,6 4.5,8 Q3,9 1.2,7.5 Z M7.5,5 Q9.5,3.5 11.5,5.5 Q11.5,9 9,11 Q8,9 8.5,7.5 Z" fill="#2a9a3a"/><circle cx="4.5" cy="3.8" r="1.4" fill="#b8f0b0" opacity="0.7"/><circle cx="11" cy="1.8" r="1.3" fill="#9ad8f8"/></svg>
<span id="tr8" class="t tr " style="left:70.1px;top:214.12px;transform:scaleX(0.8842);transform-origin:0 50%;">Abbreviated_system</span>
<svg class="a" style="left:55.5px;top:225.86px" width="13" height="13"><circle cx="6" cy="6.5" r="5.6" fill="#1f55c0"/><path d="M1.5,5 Q3,1.5 6.5,1.3 Q7,3.5 5,4.5 Q3.5,6 4.5,8 Q3,9 1.2,7.5 Z M7.5,5 Q9.5,3.5 11.5,5.5 Q11.5,9 9,11 Q8,9 8.5,7.5 Z" fill="#2a9a3a"/><circle cx="4.5" cy="3.8" r="1.4" fill="#b8f0b0" opacity="0.7"/><circle cx="11" cy="1.8" r="1.3" fill="#9ad8f8"/></svg>
<span id="tr9" class="t tr " style="left:70.1px;top:227.86px;transform:scaleX(0.8102);transform-origin:0 50%;">GVL_Alarm</span>
<svg class="a" style="left:55.5px;top:239.6px" width="13" height="13"><circle cx="6" cy="6.5" r="5.6" fill="#1f55c0"/><path d="M1.5,5 Q3,1.5 6.5,1.3 Q7,3.5 5,4.5 Q3.5,6 4.5,8 Q3,9 1.2,7.5 Z M7.5,5 Q9.5,3.5 11.5,5.5 Q11.5,9 9,11 Q8,9 8.5,7.5 Z" fill="#2a9a3a"/><circle cx="4.5" cy="3.8" r="1.4" fill="#b8f0b0" opacity="0.7"/><circle cx="11" cy="1.8" r="1.3" fill="#9ad8f8"/></svg>
<span id="tr10" class="t tr " style="left:70.1px;top:241.60px;transform:scaleX(0.8456);transform-origin:0 50%;">GVL_Maintenanace_caunter</span>
<svg class="a" style="left:55.5px;top:253.34px" width="13" height="13"><circle cx="6" cy="6.5" r="5.6" fill="#1f55c0"/><path d="M1.5,5 Q3,1.5 6.5,1.3 Q7,3.5 5,4.5 Q3.5,6 4.5,8 Q3,9 1.2,7.5 Z M7.5,5 Q9.5,3.5 11.5,5.5 Q11.5,9 9,11 Q8,9 8.5,7.5 Z" fill="#2a9a3a"/><circle cx="4.5" cy="3.8" r="1.4" fill="#b8f0b0" opacity="0.7"/><circle cx="11" cy="1.8" r="1.3" fill="#9ad8f8"/></svg>
<span id="tr11" class="t tr " style="left:70.1px;top:255.34px;transform:scaleX(0.7977);transform-origin:0 50%;">GVL_TCP_IP</span>
<svg class="a" style="left:55.5px;top:267.08px" width="13" height="13"><circle cx="6" cy="6.5" r="5.6" fill="#1f55c0"/><path d="M1.5,5 Q3,1.5 6.5,1.3 Q7,3.5 5,4.5 Q3.5,6 4.5,8 Q3,9 1.2,7.5 Z M7.5,5 Q9.5,3.5 11.5,5.5 Q11.5,9 9,11 Q8,9 8.5,7.5 Z" fill="#2a9a3a"/><circle cx="4.5" cy="3.8" r="1.4" fill="#b8f0b0" opacity="0.7"/><circle cx="11" cy="1.8" r="1.3" fill="#9ad8f8"/></svg>
<span id="tr12" class="t tr " style="left:70.1px;top:269.08px;transform:scaleX(0.8000);transform-origin:0 50%;">MPDU</span>
<svg class="a" style="left:55.5px;top:280.82px" width="13" height="13"><circle cx="6" cy="6.5" r="5.6" fill="#1f55c0"/><path d="M1.5,5 Q3,1.5 6.5,1.3 Q7,3.5 5,4.5 Q3.5,6 4.5,8 Q3,9 1.2,7.5 Z M7.5,5 Q9.5,3.5 11.5,5.5 Q11.5,9 9,11 Q8,9 8.5,7.5 Z" fill="#2a9a3a"/><circle cx="4.5" cy="3.8" r="1.4" fill="#b8f0b0" opacity="0.7"/><circle cx="11" cy="1.8" r="1.3" fill="#9ad8f8"/></svg>
<span id="tr13" class="t tr " style="left:70.1px;top:282.82px;transform:scaleX(0.7996);transform-origin:0 50%;">MPDUA</span>
<svg class="a" style="left:55.5px;top:294.56px" width="13" height="13"><circle cx="6" cy="6.5" r="5.6" fill="#1f55c0"/><path d="M1.5,5 Q3,1.5 6.5,1.3 Q7,3.5 5,4.5 Q3.5,6 4.5,8 Q3,9 1.2,7.5 Z M7.5,5 Q9.5,3.5 11.5,5.5 Q11.5,9 9,11 Q8,9 8.5,7.5 Z" fill="#2a9a3a"/><circle cx="4.5" cy="3.8" r="1.4" fill="#b8f0b0" opacity="0.7"/><circle cx="11" cy="1.8" r="1.3" fill="#9ad8f8"/></svg>
<span id="tr14" class="t tr " style="left:70.1px;top:296.56px;transform:scaleX(0.7812);transform-origin:0 50%;">MPDUB</span>
<svg class="a" style="left:55.5px;top:308.3px" width="13" height="13"><circle cx="6" cy="6.5" r="5.6" fill="#1f55c0"/><path d="M1.5,5 Q3,1.5 6.5,1.3 Q7,3.5 5,4.5 Q3.5,6 4.5,8 Q3,9 1.2,7.5 Z M7.5,5 Q9.5,3.5 11.5,5.5 Q11.5,9 9,11 Q8,9 8.5,7.5 Z" fill="#2a9a3a"/><circle cx="4.5" cy="3.8" r="1.4" fill="#b8f0b0" opacity="0.7"/><circle cx="11" cy="1.8" r="1.3" fill="#9ad8f8"/></svg>
<span id="tr15" class="t tr " style="left:70.1px;top:310.30px;transform:scaleX(0.7863);transform-origin:0 50%;">MPDU_S</span>
<svg class="a" style="left:29.5px;top:324.84000000000003px" width="7" height="7"><rect x="0.5" y="0.5" width="6" height="6" fill="#fafafa" stroke="#b4c4cc" stroke-width="0.8"/><line x1="1.5" y1="3.5" x2="5.5" y2="3.5" stroke="#444" stroke-width="1"/></svg>
<svg class="a" style="left:40px;top:322.84px" width="13" height="11"><path d="M0.5,1.5 H4.5 L5.5,2.5 H11.5 V10 H0.5 Z" fill="#e8c560" stroke="#b89540" stroke-width="0.8"/><path d="M0.5,4 H12.5 L11.5,10 H0.5 Z" fill="#f5dc8a" stroke="#c8a550" stroke-width="0.6"/></svg>
<span id="tr16" class="t tr " style="left:55.6px;top:324.04px;transform:scaleX(0.8925);transform-origin:0 50%;">Operations</span>
<svg class="a" style="left:55.5px;top:336.58px" width="11" height="12"><path d="M1.5,0.5 H7.5 L10,3 V11.5 H1.5 Z" fill="#fff" stroke="#555" stroke-width="1"/><rect x="2.5" y="3.5" width="2" height="6" fill="#2020e0"/><rect x="6" y="3.5" width="2" height="6" fill="#2020e0"/><line x1="1.5" y1="6.5" x2="9" y2="6.5" stroke="#2020e0" stroke-width="1"/></svg>
<span id="tr17" class="t tr " style="left:70.1px;top:337.78px;transform:scaleX(0.8545);transform-origin:0 50%;">Circuit_breaker_system (PRG)</span>
<svg class="a" style="left:55.5px;top:350.32px" width="11" height="12"><path d="M1.5,0.5 H7.5 L10,3 V11.5 H1.5 Z" fill="#fff" stroke="#555" stroke-width="1"/><rect x="2.5" y="3.5" width="2" height="6" fill="#2020e0"/><rect x="6" y="3.5" width="2" height="6" fill="#2020e0"/><line x1="1.5" y1="6.5" x2="9" y2="6.5" stroke="#2020e0" stroke-width="1"/></svg>
<span id="tr18" class="t tr " style="left:70.1px;top:351.52px;transform:scaleX(0.8595);transform-origin:0 50%;">Ciruit_breaker_system_bypas (PRG)</span>
<svg class="a" style="left:55.5px;top:364.06px" width="11" height="12"><path d="M1.5,0.5 H7.5 L10,3 V11.5 H1.5 Z" fill="#fff" stroke="#555" stroke-width="1"/><rect x="2.5" y="3.5" width="2" height="6" fill="#2020e0"/><rect x="6" y="3.5" width="2" height="6" fill="#2020e0"/><line x1="1.5" y1="6.5" x2="9" y2="6.5" stroke="#2020e0" stroke-width="1"/></svg>
<span id="tr19" class="t tr " style="left:70.1px;top:365.26px;transform:scaleX(0.8347);transform-origin:0 50%;">Comm_data (PRG)</span>
<svg class="a" style="left:55.5px;top:377.8px" width="11" height="12"><path d="M1.5,0.5 H7.5 L10,3 V11.5 H1.5 Z" fill="#fff" stroke="#555" stroke-width="1"/><rect x="2.5" y="3.5" width="2" height="6" fill="#2020e0"/><rect x="6" y="3.5" width="2" height="6" fill="#2020e0"/><line x1="1.5" y1="6.5" x2="9" y2="6.5" stroke="#2020e0" stroke-width="1"/></svg>
<span id="tr20" class="t tr " style="left:70.1px;top:379.00px;transform:scaleX(0.8309);transform-origin:0 50%;">Controlled_operation_MPDU_28_VDC (PRG)</span>
<svg class="a" style="left:55.5px;top:391.54px" width="11" height="12"><path d="M1.5,0.5 H7.5 L10,3 V11.5 H1.5 Z" fill="#fff" stroke="#555" stroke-width="1"/><rect x="2.5" y="3.5" width="2" height="6" fill="#2020e0"/><rect x="6" y="3.5" width="2" height="6" fill="#2020e0"/><line x1="1.5" y1="6.5" x2="9" y2="6.5" stroke="#2020e0" stroke-width="1"/></svg>
<span id="tr21" class="t tr " style="left:70.1px;top:392.74px;transform:scaleX(0.8327);transform-origin:0 50%;">Controlled_operation_MPDU_400_VDC (PRG)</span>
<svg class="a" style="left:55.5px;top:405.28px" width="11" height="12"><path d="M1.5,0.5 H7.5 L10,3 V11.5 H1.5 Z" fill="#fff" stroke="#555" stroke-width="1"/><rect x="2.5" y="3.5" width="2" height="6" fill="#2020e0"/><rect x="6" y="3.5" width="2" height="6" fill="#2020e0"/><line x1="1.5" y1="6.5" x2="9" y2="6.5" stroke="#2020e0" stroke-width="1"/></svg>
<span id="tr22" class="t tr " style="left:70.1px;top:406.48px;transform:scaleX(0.8061);transform-origin:0 50%;">POU (PRG)</span>
<svg class="a" style="left:41px;top:419.02px" width="11" height="12"><path d="M1.5,0.5 H7.5 L10,3 V11.5 H1.5 Z" fill="#fff" stroke="#555" stroke-width="1"/><rect x="3" y="3.5" width="5" height="6" fill="#3b3bd8"/><circle cx="5.5" cy="6.5" r="1.5" fill="#fff"/></svg>
<span id="tr23" class="t tr " style="left:55.6px;top:420.22px;transform:scaleX(0.8120);transform-origin:0 50%;">READ_VAR (PRG)</span>
<svg class="a" style="left:29.5px;top:434.76px" width="7" height="7"><rect x="0.5" y="0.5" width="6" height="6" fill="#fafafa" stroke="#b4c4cc" stroke-width="0.8"/><line x1="1.5" y1="3.5" x2="5.5" y2="3.5" stroke="#444" stroke-width="1"/><line x1="3.5" y1="1.5" x2="3.5" y2="5.5" stroke="#333" stroke-width="1"/></svg>
<svg class="a" style="left:40px;top:432.76px" width="13" height="11"><path d="M0.5,1.5 H4.5 L5.5,2.5 H11.5 V10 H0.5 Z" fill="#e8c560" stroke="#b89540" stroke-width="0.8"/><path d="M0.5,4 H12.5 L11.5,10 H0.5 Z" fill="#f5dc8a" stroke="#c8a550" stroke-width="0.6"/></svg>
<span id="tr24" class="t tr " style="left:55.6px;top:433.96px;transform:scaleX(0.8814);transform-origin:0 50%;">System data</span>
<svg class="a" style="left:29.5px;top:448.5px" width="7" height="7"><rect x="0.5" y="0.5" width="6" height="6" fill="#fafafa" stroke="#b4c4cc" stroke-width="0.8"/><line x1="1.5" y1="3.5" x2="5.5" y2="3.5" stroke="#444" stroke-width="1"/><line x1="3.5" y1="1.5" x2="3.5" y2="5.5" stroke="#333" stroke-width="1"/></svg>
<svg class="a" style="left:40px;top:446.5px" width="13" height="12"><rect x="0.5" y="0.5" width="11" height="11" fill="#6a6a6a" stroke="#444" stroke-width="0.8"/><rect x="2" y="2" width="8" height="8" fill="#999"/><circle cx="4" cy="7.5" r="2" fill="#e8c020"/><circle cx="7.5" cy="8" r="1.8" fill="#3a9a3a"/><rect x="6" y="2.5" width="3" height="2" fill="#d03020"/></svg>
<span id="tr25" class="t tr " style="left:55.6px;top:447.70px;transform:scaleX(0.8800);transform-origin:0 50%;">Task Configuration</span>
<svg class="a" style="left:29.5px;top:462.24px" width="7" height="7"><rect x="0.5" y="0.5" width="6" height="6" fill="#fafafa" stroke="#b4c4cc" stroke-width="0.8"/><line x1="1.5" y1="3.5" x2="5.5" y2="3.5" stroke="#444" stroke-width="1"/><line x1="3.5" y1="1.5" x2="3.5" y2="5.5" stroke="#333" stroke-width="1"/></svg>
<svg class="a" style="left:40px;top:460.24px" width="13" height="11"><path d="M0.5,1.5 H4.5 L5.5,2.5 H11.5 V10 H0.5 Z" fill="#e8c560" stroke="#b89540" stroke-width="0.8"/><path d="M0.5,4 H12.5 L11.5,10 H0.5 Z" fill="#f5dc8a" stroke="#c8a550" stroke-width="0.6"/></svg>
<span id="tr26" class="t tr " style="left:55.6px;top:461.44px;transform:scaleX(0.8056);transform-origin:0 50%;">TCP</span>
<svg class="a" style="left:15.0px;top:475.98px" width="7" height="7"><rect x="0.5" y="0.5" width="6" height="6" fill="#fafafa" stroke="#b4c4cc" stroke-width="0.8"/><line x1="1.5" y1="3.5" x2="5.5" y2="3.5" stroke="#444" stroke-width="1"/><line x1="3.5" y1="1.5" x2="3.5" y2="5.5" stroke="#333" stroke-width="1"/></svg>
<svg class="a" style="left:26px;top:473.98px" width="13" height="11"><path d="M0.5,1.5 H4.5 L5.5,2.5 H11.5 V10 H0.5 Z" fill="#e8c560" stroke="#b89540" stroke-width="0.8"/><path d="M0.5,4 H12.5 L11.5,10 H0.5 Z" fill="#f5dc8a" stroke="#c8a550" stroke-width="0.6"/></svg>
<span id="tr27" class="t tr " style="left:41.1px;top:475.18px;transform:scaleX(0.8226);transform-origin:0 50%;">Global</span>
</div></div>
<div class="a" style="left:193px;top:102px;width:13px;height:14px;background:#e8e8e8;border:1px solid #bdbdbd"></div>
<svg class="a" style="left:196px;top:107px" width="8" height="5"><path d="M0.5,0.5 L7.5,0.5 L4,4.5 Z" fill="#111"/></svg>
<div class="a" style="left:0;top:553px;width:206px;height:12px;background:#f0f0f0"></div>
<div class="a" style="left:9px;top:554px;width:149px;height:10px;background:#cdcdcd"></div>
<svg class="a" style="left:1px;top:555px" width="6" height="8"><path d="M4.5,1 L1.5,4 L4.5,7" fill="none" stroke="#444" stroke-width="1.1"/></svg>
<svg class="a" style="left:198px;top:555px" width="6" height="8"><path d="M1.5,1 L4.5,4 L1.5,7" fill="none" stroke="#444" stroke-width="1.1"/></svg>
<!-- bottom tabs -->
<div class="a" style="left:0;top:566px;width:210px;height:11px;background:#f0f0f0"></div>
<div class="a" style="left:0;top:566px;width:61px;height:11px;background:#eaeaea;border-right:1px solid #c8c8c8"></div>
<div class="a" style="left:61px;top:565px;width:77px;height:12px;background:#fff;border-right:1px solid #c8c8c8"></div>
<svg class="a" style="left:0px;top:568px" width="10" height="9"><rect x="0" y="1" width="9" height="8" fill="#4a86c8"/><rect x="2" y="3" width="5" height="4" fill="#9fd0f8"/></svg>
<span id="bt0" class="t" style="left:12.3px;top:571px;font-size:9px;color:#8a8a8a;transform:scaleX(0.8775);transform-origin:0 50%;">Devices tree</span>
<svg class="a" style="left:62px;top:567px" width="12" height="10"><circle cx="6" cy="6" r="4.2" fill="none" stroke="#36a030" stroke-width="2.8" stroke-dasharray="1.6,0.9"/><circle cx="6" cy="6" r="2" fill="#fff"/></svg>
<span id="bt1" class="t" style="left:76.6px;top:571px;font-size:9px;color:#222;transform:scaleX(0.8565);transform-origin:0 50%;">Applications tree</span>
<svg class="a" style="left:140px;top:568px" width="12" height="9"><rect x="0.5" y="0.5" width="11" height="9" fill="#fff" stroke="#555" stroke-width="0.8"/><path d="M1,8 L4,4 L7,7 L11,2" stroke="#3a9a3a" stroke-width="1.4" fill="none"/></svg>
<span id="bt2" class="t" style="left:154.4px;top:571px;font-size:9px;color:#8a8a8a;transform:scaleX(0.8890);transform-origin:0 50%;">Tools tree</span>

<!-- EDITOR FRAME -->
<div class="a" style="left:210px;top:50px;width:814px;height:527px;background:#fff;border-left:1px solid #c8c8c8"></div>
<!-- LADDER -->
<svg class="a" style="left:0;top:0" width="1024" height="577" viewBox="0 0 1024 577">
<defs><clipPath id="lc"><rect x="211" y="116" width="803" height="454"/></clipPath></defs>
<style>
.lb{font-family:"Liberation Mono",monospace;font-size:8.9px;fill:#363636}
.cl{font-family:"Liberation Mono",monospace;font-size:8.6px;fill:#333}
.pn{font-family:"Liberation Mono",monospace;font-size:8.9px;fill:#363636}
.bk{font-family:"Liberation Mono",monospace;font-size:8.4px;font-weight:bold;fill:#222}
.nn{font-family:"Liberation Sans",sans-serif;font-size:8.3px;fill:#2f8f98}
.cm{font-family:"Liberation Mono",monospace;font-size:8.9px;font-style:italic;fill:#3a98a8}
</style>
<g clip-path="url(#lc)">
<rect x="246" y="116" width="12" height="454" fill="#f1f1f1"/>
<line x1="246" y1="116" x2="246" y2="570" stroke="#2a9a98" stroke-width="1.6"/>
<line x1="268" y1="116" x2="268" y2="570" stroke="#606060" stroke-width="1.15"/>
<polyline points="387.5,110 387.5,120.5 583.5,120.5 583.5,110" fill="none" stroke="#606060" stroke-width="1.15"/>
<rect x="427.7" y="119" width="7.9" height="4" fill="#fff"/>
<rect x="425.5" y="115.5" width="2.4" height="11" fill="#c9d6ea" stroke="#5f79a8" stroke-width="0.9"/>
<rect x="436.1" y="115.5" width="2.4" height="11" fill="#c9d6ea" stroke="#5f79a8" stroke-width="0.9"/>
<line x1="368.5" y1="110" x2="368.5" y2="391" stroke="#606060" stroke-width="1.15"/>
<line x1="381.5" y1="110" x2="381.5" y2="340" stroke="#606060" stroke-width="1.15"/>
<line x1="381.5" y1="225.5" x2="967" y2="225.5" stroke="#606060" stroke-width="1.15"/>
<rect x="480.9" y="223.5" width="7.9" height="4" fill="#fff"/>
<rect x="478.7" y="220.0" width="2.4" height="11.0" fill="#c9d6ea" stroke="#5f79a8" stroke-width="0.9"/>
<rect x="489.3" y="220.0" width="2.4" height="11.0" fill="#c9d6ea" stroke="#5f79a8" stroke-width="0.9"/>
<text x="485.6" y="215" text-anchor="middle" class="lb">IoConfig_Globals_Mapping<tspan fill="#3a3aff">.</tspan>Q400_RIP</text>
<circle cx="590" cy="225.5" r="1.4" fill="#222"/>
<polyline points="590,225.5 590,263.7 964,263.7" fill="none" stroke="#606060" stroke-width="1.15"/>
<rect x="631.3000000000001" y="261.7" width="7.9" height="4" fill="#fff"/>
<rect x="629.1" y="258.2" width="2.4" height="11.0" fill="#c9d6ea" stroke="#5f79a8" stroke-width="0.9"/>
<rect x="639.7" y="258.2" width="2.4" height="11.0" fill="#c9d6ea" stroke="#5f79a8" stroke-width="0.9"/>
<text x="635" y="253" text-anchor="middle" class="lb">MPDU<tspan fill="#3a3aff">.</tspan>T_Q400</text>
<rect x="970" y="223.5" width="8.6" height="4" fill="#fff"/>
<path d="M971.6,219.3 Q967.4,219.3 967.4,222.8 V228.2 Q967.4,231.7 971.6,231.7 V230.2 Q969.3,230.2 969.3,228.2 V222.8 Q969.3,220.8 971.6,220.8 Z" fill="#c9d6ea" stroke="#6a82b4" stroke-width="0.9"/>
<path d="M977.0,219.3 Q981.2,219.3 981.2,222.8 V228.2 Q981.2,231.7 977.0,231.7 V230.2 Q979.3000000000001,230.2 979.3000000000001,228.2 V222.8 Q979.3000000000001,220.8 977.0,220.8 Z" fill="#c9d6ea" stroke="#6a82b4" stroke-width="0.9"/>
<text x="974.3" y="228.8" text-anchor="middle" class="cl">S</text>
<text x="974.5" y="215" text-anchor="middle" class="lb">MPDU<tspan fill="#3a3aff">.</tspan>T_Q400</text>
<rect x="967" y="261.7" width="8.6" height="4" fill="#fff"/>
<path d="M968.6,257.5 Q964.4,257.5 964.4,261.0 V266.4 Q964.4,269.9 968.6,269.9 V268.4 Q966.3,268.4 966.3,266.4 V261.0 Q966.3,259.0 968.6,259.0 Z" fill="#c9d6ea" stroke="#6a82b4" stroke-width="0.9"/>
<path d="M974.0,257.5 Q978.2,257.5 978.2,261.0 V266.4 Q978.2,269.9 974.0,269.9 V268.4 Q976.3000000000001,268.4 976.3000000000001,266.4 V261.0 Q976.3000000000001,259.0 974.0,259.0 Z" fill="#c9d6ea" stroke="#6a82b4" stroke-width="0.9"/>
<text x="971.3" y="267.0" text-anchor="middle" class="cl">R</text>
<text x="971.5" y="253" text-anchor="middle" class="lb">MPDU<tspan fill="#3a3aff">.</tspan>StartQ400</text>
<line x1="381.5" y1="302.2" x2="964" y2="302.2" stroke="#606060" stroke-width="1.15"/>
<rect x="480.9" y="300.2" width="7.9" height="4" fill="#fff"/>
<rect x="478.7" y="296.7" width="2.4" height="11.0" fill="#c9d6ea" stroke="#5f79a8" stroke-width="0.9"/>
<rect x="489.3" y="296.7" width="2.4" height="11.0" fill="#c9d6ea" stroke="#5f79a8" stroke-width="0.9"/>
<text x="485.6" y="291.5" text-anchor="middle" class="lb">IoConfig_Globals_Mapping<tspan fill="#3a3aff">.</tspan>Q400_AUX</text>
<rect x="623.2" y="300.2" width="7.9" height="4" fill="#fff"/>
<rect x="621.0" y="296.7" width="2.4" height="11.0" fill="#c9d6ea" stroke="#5f79a8" stroke-width="0.9"/>
<rect x="631.6" y="296.7" width="2.4" height="11.0" fill="#c9d6ea" stroke="#5f79a8" stroke-width="0.9"/>
<text x="628" y="291.5" text-anchor="middle" class="lb">Delay_Q400_ON</text>
<rect x="967" y="300.2" width="8.6" height="4" fill="#fff"/>
<path d="M968.6,296.0 Q964.4,296.0 964.4,299.5 V304.9 Q964.4,308.4 968.6,308.4 V306.9 Q966.3,306.9 966.3,304.9 V299.5 Q966.3,297.5 968.6,297.5 Z" fill="#c9d6ea" stroke="#6a82b4" stroke-width="0.9"/>
<path d="M974.0,296.0 Q978.2,296.0 978.2,299.5 V304.9 Q978.2,308.4 974.0,308.4 V306.9 Q976.3000000000001,306.9 976.3000000000001,304.9 V299.5 Q976.3000000000001,297.5 974.0,297.5 Z" fill="#c9d6ea" stroke="#6a82b4" stroke-width="0.9"/>
<text x="971.3" y="305.5" text-anchor="middle" class="cl">R</text>
<text x="971.5" y="291.5" text-anchor="middle" class="lb">MPDU<tspan fill="#3a3aff">.</tspan>StartQ400</text>
<line x1="381.5" y1="340" x2="956.5" y2="340" stroke="#606060" stroke-width="1.15"/>
<rect x="480.9" y="338" width="7.9" height="4" fill="#fff"/>
<rect x="478.7" y="334.5" width="2.4" height="11" fill="#c9d6ea" stroke="#5f79a8" stroke-width="0.9"/>
<rect x="489.3" y="334.5" width="2.4" height="11" fill="#c9d6ea" stroke="#5f79a8" stroke-width="0.9"/>
<text x="485.6" y="329.5" text-anchor="middle" class="lb">IoConfig_Globals_Mapping<tspan fill="#3a3aff">.</tspan>Q400_AUX</text>
<rect x="623.2" y="338" width="7.9" height="4" fill="#fff"/>
<rect x="621.0" y="334.5" width="2.4" height="11" fill="#c9d6ea" stroke="#5f79a8" stroke-width="0.9"/>
<rect x="631.6" y="334.5" width="2.4" height="11" fill="#c9d6ea" stroke="#5f79a8" stroke-width="0.9"/>
<line x1="626.0" y1="343" x2="629.0" y2="338" stroke="#444" stroke-width="0.9"/>
<text x="628" y="329.5" text-anchor="middle" class="lb">Delay_Q400_ON</text>
<rect x="959.5" y="338" width="8.6" height="4" fill="#fff"/>
<path d="M961.1,333.8 Q956.9,333.8 956.9,337.3 V342.7 Q956.9,346.2 961.1,346.2 V344.7 Q958.8,344.7 958.8,342.7 V337.3 Q958.8,335.3 961.1,335.3 Z" fill="#c9d6ea" stroke="#6a82b4" stroke-width="0.9"/>
<path d="M966.5,333.8 Q970.7,333.8 970.7,337.3 V342.7 Q970.7,346.2 966.5,346.2 V344.7 Q968.8000000000001,344.7 968.8000000000001,342.7 V337.3 Q968.8000000000001,335.3 966.5,335.3 Z" fill="#c9d6ea" stroke="#6a82b4" stroke-width="0.9"/>
<text x="963.8" y="343.3" text-anchor="middle" class="cl">S</text>
<text x="963.8" y="329.5" text-anchor="middle" class="lb">MPDU<tspan fill="#3a3aff">.</tspan>M_Start_Q400</text>
<line x1="368.5" y1="391" x2="491" y2="391" stroke="#606060" stroke-width="1.15"/>
<rect x="425.4" y="389" width="7.9" height="4" fill="#fff"/>
<rect x="423.2" y="385.5" width="2.4" height="11" fill="#c9d6ea" stroke="#5f79a8" stroke-width="0.9"/>
<rect x="433.8" y="385.5" width="2.4" height="11" fill="#c9d6ea" stroke="#5f79a8" stroke-width="0.9"/>
<text x="429.6" y="380" text-anchor="middle" class="lb">MPDU<tspan fill="#3a3aff">.</tspan>M_Start_Q400</text>
<rect x="491.5" y="373" width="94" height="55.5" fill="#dce6f4" stroke="#5c78a6" stroke-width="1"/>
<text x="538.5" y="368" text-anchor="middle" class="lb">TON_Q400_Start</text>
<text x="538.5" y="383" text-anchor="middle" class="bk">TON</text>
<rect x="526" y="385" width="25" height="25" fill="#f2f2f2"/>
<circle cx="538.2" cy="397.2" r="11.2" fill="#cfcfcf" stroke="#555" stroke-width="1.2"/>
<line x1="547.70" y1="397.20" x2="545.80" y2="397.20" stroke="#444" stroke-width="0.8"/>
<line x1="546.43" y1="401.95" x2="544.78" y2="401.00" stroke="#444" stroke-width="0.8"/>
<line x1="542.95" y1="405.43" x2="542.00" y2="403.78" stroke="#444" stroke-width="0.8"/>
<line x1="538.20" y1="406.70" x2="538.20" y2="404.80" stroke="#444" stroke-width="0.8"/>
<line x1="533.45" y1="405.43" x2="534.40" y2="403.78" stroke="#444" stroke-width="0.8"/>
<line x1="529.97" y1="401.95" x2="531.62" y2="401.00" stroke="#444" stroke-width="0.8"/>
<line x1="528.70" y1="397.20" x2="530.60" y2="397.20" stroke="#444" stroke-width="0.8"/>
<line x1="529.97" y1="392.45" x2="531.62" y2="393.40" stroke="#444" stroke-width="0.8"/>
<line x1="533.45" y1="388.97" x2="534.40" y2="390.62" stroke="#444" stroke-width="0.8"/>
<line x1="538.20" y1="387.70" x2="538.20" y2="389.60" stroke="#444" stroke-width="0.8"/>
<line x1="542.95" y1="388.97" x2="542.00" y2="390.62" stroke="#444" stroke-width="0.8"/>
<line x1="546.43" y1="392.45" x2="544.78" y2="393.40" stroke="#444" stroke-width="0.8"/>
<polyline points="531,401 538,401 538,394 545,394" fill="none" stroke="#e0302a" stroke-width="1.2"/>
<text x="494" y="394" text-anchor="start" class="pn">IN</text>
<text x="494" y="420" text-anchor="start" class="pn">PT</text>
<text x="582.5" y="394" text-anchor="end" class="pn">Q</text>
<text x="582.5" y="408" text-anchor="end" class="pn">ET</text>
<line x1="586" y1="391" x2="956.5" y2="391" stroke="#606060" stroke-width="1.15"/>
<polyline points="913.4,391 913.4,420 956.5,420" fill="none" stroke="#606060" stroke-width="1.15"/>
<rect x="959.5" y="389" width="8.6" height="4" fill="#fff"/>
<path d="M961.1,384.8 Q956.9,384.8 956.9,388.3 V393.7 Q956.9,397.2 961.1,397.2 V395.7 Q958.8,395.7 958.8,393.7 V388.3 Q958.8,386.3 961.1,386.3 Z" fill="#c9d6ea" stroke="#6a82b4" stroke-width="0.9"/>
<path d="M966.5,384.8 Q970.7,384.8 970.7,388.3 V393.7 Q970.7,397.2 966.5,397.2 V395.7 Q968.8000000000001,395.7 968.8000000000001,393.7 V388.3 Q968.8000000000001,386.3 966.5,386.3 Z" fill="#c9d6ea" stroke="#6a82b4" stroke-width="0.9"/>
<text x="963.8" y="394.3" text-anchor="middle" class="cl">R</text>
<text x="963.8" y="380" text-anchor="middle" class="lb">MPDU<tspan fill="#3a3aff">.</tspan>M_Start_Q400</text>
<rect x="959.5" y="418" width="8.6" height="4" fill="#fff"/>
<path d="M961.1,413.8 Q956.9,413.8 956.9,417.3 V422.7 Q956.9,426.2 961.1,426.2 V424.7 Q958.8,424.7 958.8,422.7 V417.3 Q958.8,415.3 961.1,415.3 Z" fill="#c9d6ea" stroke="#6a82b4" stroke-width="0.9"/>
<path d="M966.5,413.8 Q970.7,413.8 970.7,417.3 V422.7 Q970.7,426.2 966.5,426.2 V424.7 Q968.8000000000001,424.7 968.8000000000001,422.7 V417.3 Q968.8000000000001,415.3 966.5,415.3 Z" fill="#c9d6ea" stroke="#6a82b4" stroke-width="0.9"/>
<text x="963.8" y="423.3" text-anchor="middle" class="cl">R</text>
<text x="962.8" y="410" text-anchor="middle" class="lb">MPDU<tspan fill="#3a3aff">.</tspan>StartQ400</text>
<line x1="586" y1="404.6" x2="591" y2="404.6" stroke="#606060" stroke-width="1.15"/>
<rect x="592.5" y="399.5" width="13" height="11" fill="#fff" stroke="#dcdcdc" stroke-width="0.8" stroke-dasharray="1,1"/>
<line x1="478" y1="416.5" x2="491" y2="416.5" stroke="#606060" stroke-width="1.15"/>
<text x="476" y="419.5" text-anchor="end" class="lb" fill="#a8981e" style="fill:#a49a2a">T#300MS</text>
<line x1="246" y1="442.5" x2="1014" y2="442.5" stroke="#dadada" stroke-width="1"/>
<line x1="246" y1="507" x2="1014" y2="507" stroke="#dadada" stroke-width="1"/>
<text x="243.8" y="451" text-anchor="end" class="nn">2</text>
<line x1="268" y1="487" x2="916.5" y2="487" stroke="#606060" stroke-width="1.15"/>
<rect x="302.9" y="485" width="7.9" height="4" fill="#fff"/>
<rect x="300.7" y="481.5" width="2.4" height="11" fill="#c9d6ea" stroke="#5f79a8" stroke-width="0.9"/>
<rect x="311.3" y="481.5" width="2.4" height="11" fill="#c9d6ea" stroke="#5f79a8" stroke-width="0.9"/>
<text x="307.5" y="490" text-anchor="middle" class="cl">P</text>
<text x="306.5" y="476.5" text-anchor="middle" class="lb">on_Q400</text>
<rect x="919.5" y="485" width="8.6" height="4" fill="#fff"/>
<path d="M921.1,480.8 Q916.9,480.8 916.9,484.3 V489.7 Q916.9,493.2 921.1,493.2 V491.7 Q918.8,491.7 918.8,489.7 V484.3 Q918.8,482.3 921.1,482.3 Z" fill="#c9d6ea" stroke="#6a82b4" stroke-width="0.9"/>
<path d="M926.5,480.8 Q930.7,480.8 930.7,484.3 V489.7 Q930.7,493.2 926.5,493.2 V491.7 Q928.8000000000001,491.7 928.8000000000001,489.7 V484.3 Q928.8000000000001,482.3 926.5,482.3 Z" fill="#c9d6ea" stroke="#6a82b4" stroke-width="0.9"/>
<text x="923.8" y="490.3" text-anchor="middle" class="cl">S</text>
<text x="923.5" y="476.5" text-anchor="middle" class="lb">IoConfig_Globals_Mapping<tspan fill="#3a3aff">.</tspan>Q400_Y0</text>
<text x="243.8" y="516" text-anchor="end" class="nn">3</text>
<line x1="268" y1="551.7" x2="916.5" y2="551.7" stroke="#606060" stroke-width="1.15"/>
<rect x="302.9" y="549.7" width="7.9" height="4" fill="#fff"/>
<rect x="300.7" y="546.2" width="2.4" height="11.0" fill="#c9d6ea" stroke="#5f79a8" stroke-width="0.9"/>
<rect x="311.3" y="546.2" width="2.4" height="11.0" fill="#c9d6ea" stroke="#5f79a8" stroke-width="0.9"/>
<text x="307.5" y="554.7" text-anchor="middle" class="cl">N</text>
<text x="306.5" y="541" text-anchor="middle" class="lb">on_Q400</text>
<rect x="919.5" y="549.7" width="8.6" height="4" fill="#fff"/>
<path d="M921.1,545.5 Q916.9,545.5 916.9,549.0 V554.4000000000001 Q916.9,557.9000000000001 921.1,557.9000000000001 V556.4000000000001 Q918.8,556.4000000000001 918.8,554.4000000000001 V549.0 Q918.8,547.0 921.1,547.0 Z" fill="#c9d6ea" stroke="#6a82b4" stroke-width="0.9"/>
<path d="M926.5,545.5 Q930.7,545.5 930.7,549.0 V554.4000000000001 Q930.7,557.9000000000001 926.5,557.9000000000001 V556.4000000000001 Q928.8000000000001,556.4000000000001 928.8000000000001,554.4000000000001 V549.0 Q928.8000000000001,547.0 926.5,547.0 Z" fill="#c9d6ea" stroke="#6a82b4" stroke-width="0.9"/>
<text x="923.8" y="555.0" text-anchor="middle" class="cl">R</text>
<text x="923.5" y="541" text-anchor="middle" class="lb">IoConfig_Globals_Mapping<tspan fill="#3a3aff">.</tspan>Q400_Y0</text>
<text x="272.5" y="451" class="cm" style="unicode-bidi:bidi-override;direction:ltr">הסיפת Q400 בצמב ON</text>
<text x="272.5" y="516" class="cm" style="unicode-bidi:bidi-override;direction:ltr">סופיא Q400 בצמב ON</text>
</g>
</svg>
<div class="a" style="left:211px;top:50px;width:813px;height:16px;background:#f0f0f0;border-top:1px solid #c4c4c4"></div>
<svg class="a" style="left:0;top:0" width="1024" height="70"><path d="M211,52.5 H270 L273,64.5 H211 Z" fill="#fafafa" stroke="#c9c9c9" stroke-width="1"/><path d="M268,64.5 L273,52.5 H339 L342,64.5 Z" fill="#fafafa" stroke="#c9c9c9" stroke-width="1"/><path d="M337,64.5 L342,52.5 H400 L403,64.5 Z" fill="#fafafa" stroke="#c9c9c9" stroke-width="1"/><path d="M398,64.5 L403,52.5 H488 L491,64.5 Z" fill="#fafafa" stroke="#c9c9c9" stroke-width="1"/><path d="M486,64.5 L491,52.5 H678 L681,64.5 Z" fill="#fafafa" stroke="#c9c9c9" stroke-width="1"/><path d="M676,64.5 L681,52.5 H873 L866,64.5 Z" fill="#fafafa" stroke="#c9c9c9" stroke-width="1"/><path d="M866,66 L877,52.5 H1010 V66 Z" fill="#fff" stroke="#c4c4c4" stroke-width="1"/></svg>
<div class="a" style="left:211px;top:64.5px;width:655px;height:1px;background:#d4d4d4"></div>
<span id="tab0" class="t tb" style="left:209.5px;top:53.5px;transform:scaleX(0.9338);transform-origin:0 50%;">xtProperty</span>
<span id="tab1" class="t tb" style="left:294.1px;top:53.5px;transform:scaleX(0.8754);transform-origin:0 50%;">GetTitle</span>
<span id="tab2" class="t tb" style="left:362.1px;top:53.5px;transform:scaleX(0.7925);transform-origin:0 50%;">MPDU</span>
<span id="tab3" class="t tb" style="left:427.1px;top:53.5px;transform:scaleX(0.8423);transform-origin:0 50%;">Comm_data</span>
<span id="tab4" class="t tb" style="left:521.1px;top:53.5px;transform:scaleX(0.8436);transform-origin:0 50%;">Controlled_operation_MPDU_28_VDC</span>
<span id="tab5" class="t tb" style="left:711.1px;top:53.5px;transform:scaleX(0.8435);transform-origin:0 50%;">Controlled_operation_MPDU_400_VDC</span>
<span id="tabA" class="t tb" style="left:894.2px;top:53.5px;font-weight:bold;color:#111;transform:scaleX(0.9749);transform-origin:0 50%;">Circuit_breaker_system</span>
<svg class="a" style="left:999px;top:54px" width="9" height="9"><path d="M1.5,1.5 L7.5,7.5 M7.5,1.5 L1.5,7.5" stroke="#111" stroke-width="1.8"/></svg>
<svg class="a" style="left:1013px;top:56px" width="8" height="6"><path d="M0.5,1 L7.5,1 L4,5 Z" fill="#111"/></svg>
<svg class="a" style="left:277px;top:53px" width="11" height="12"><path d="M1.5,0.5 H7.5 L10,3 V11.5 H1.5 Z" fill="#fff" stroke="#555" stroke-width="1"/><rect x="3" y="3.5" width="5" height="6" fill="#4a4ae0"/></svg>
<svg class="a" style="left:346px;top:53px" width="12" height="12"><circle cx="6" cy="6" r="5.3" fill="#2a7ac8"/><path d="M2,4 Q4,2 6,3 Q5,6 3,7 Z M7,6 Q9,5 10,7 Q9,10 7,10 Z" fill="#3aa83a"/></svg>
<svg class="a" style="left:407px;top:53px" width="11" height="12"><path d="M1.5,0.5 H7.5 L10,3 V11.5 H1.5 Z" fill="#fff" stroke="#555" stroke-width="1"/><rect x="2.5" y="3.5" width="2" height="6" fill="#2020e0"/><rect x="6" y="3.5" width="2" height="6" fill="#2020e0"/><line x1="1.5" y1="6.5" x2="9" y2="6.5" stroke="#2020e0" stroke-width="1"/></svg>
<svg class="a" style="left:496px;top:53px" width="11" height="12"><path d="M1.5,0.5 H7.5 L10,3 V11.5 H1.5 Z" fill="#fff" stroke="#555" stroke-width="1"/><rect x="2.5" y="3.5" width="2" height="6" fill="#2020e0"/><rect x="6" y="3.5" width="2" height="6" fill="#2020e0"/><line x1="1.5" y1="6.5" x2="9" y2="6.5" stroke="#2020e0" stroke-width="1"/></svg>
<svg class="a" style="left:684px;top:53px" width="11" height="12"><path d="M1.5,0.5 H7.5 L10,3 V11.5 H1.5 Z" fill="#fff" stroke="#555" stroke-width="1"/><rect x="2.5" y="3.5" width="2" height="6" fill="#2020e0"/><rect x="6" y="3.5" width="2" height="6" fill="#2020e0"/><line x1="1.5" y1="6.5" x2="9" y2="6.5" stroke="#2020e0" stroke-width="1"/></svg>
<svg class="a" style="left:880px;top:53px" width="11" height="12"><path d="M1.5,0.5 H7.5 L10,3 V11.5 H1.5 Z" fill="#fff" stroke="#555" stroke-width="1"/><rect x="2.5" y="3.5" width="2" height="6" fill="#2020e0"/><rect x="6" y="3.5" width="2" height="6" fill="#2020e0"/><line x1="1.5" y1="6.5" x2="9" y2="6.5" stroke="#2020e0" stroke-width="1"/></svg>
<div class="a" style="left:211px;top:65px;width:797px;height:45px;background:#fff"></div>
<div class="a" style="left:245px;top:66px;width:1px;height:44px;background:#dedede"></div>
<svg class="a" style="left:212px;top:81px" width="8" height="8"><rect x="0.5" y="0.5" width="6.5" height="6.5" fill="#fff" stroke="#5a8ac8" stroke-width="1"/><line x1="1" y1="3.8" x2="6.5" y2="3.8" stroke="#5a8ac8" stroke-width="1"/></svg>
<span class="t" style="left:239px;top:67.2px;font-size:8.3px;color:#c0603a">1</span>
<span class="t" style="left:239px;top:79.5px;font-size:8.3px;color:#5a8ac8">2</span>
<span class="t" style="left:239px;top:91.8px;font-size:8.3px;color:#5a8ac8">3</span>
<span class="t" style="left:239px;top:103.8px;font-size:8.3px;color:#5a8ac8">4</span>
<div class="a" style="left:211px;top:66px;width:797px;height:44px;overflow:hidden">
<span class="t m dc" style="left:51.5px;top:2.4000000000000057px"><span style="color:#2828e0">PROGRAM</span> Circuit_breaker_system</span>
<span class="t m dc" style="left:51.5px;top:14.700000000000003px"><span style="color:#2828e0">VAR</span></span>
<span class="t m dc" style="left:51.5px;top:27px">    TP_Q400_ON: TP;</span>
<span class="t m dc" style="left:51.5px;top:39.2px">    TP_Q400_OFF: TP;</span>
</div>
<div class="a" style="left:996px;top:66px;width:12px;height:44px;background:#f0f0f0"></div>
<div class="a" style="left:997px;top:79px;width:10px;height:12px;background:#cdcdcd"></div>
<svg class="a" style="left:998px;top:70px" width="8" height="6"><path d="M1,4.5 L4,1.5 L7,4.5" fill="none" stroke="#555" stroke-width="1.1"/></svg>
<svg class="a" style="left:998px;top:101px" width="8" height="6"><path d="M1,1.5 L4,4.5 L7,1.5" fill="none" stroke="#555" stroke-width="1.1"/></svg>
<div class="a" style="left:947px;top:96px;width:34px;height:14px;background:#ededed;border:1px solid #c8c8c8"></div>
<span id="z100" class="t" style="left:957.2px;top:99px;font-size:9px;color:#333;transform:scaleX(0.8383);transform-origin:0 50%;">100</span>
<div class="a" style="left:981px;top:96px;width:15px;height:14px;background:#f0f0f0;border:1px solid #c8c8c8"></div>
<svg class="a" style="left:982px;top:97px" width="14" height="13"><rect x="1.5" y="4" width="6" height="7" fill="#ddd" stroke="#555" stroke-width="0.8"/><circle cx="7" cy="5.5" r="3.2" fill="#8cc8d8" stroke="#333" stroke-width="1"/><line x1="9.3" y1="7.8" x2="12.5" y2="11" stroke="#222" stroke-width="1.6"/></svg>
<div class="a" style="left:1008px;top:65px;width:16px;height:46px;background:linear-gradient(90deg,#f4f3ee,#d9d6c8)"></div>
<div class="a" style="left:1009px;top:67px;width:14px;height:15px;background:#dfe9f7;border:1px solid #7aa0d8"></div>
<svg class="a" style="left:1011px;top:69px" width="11" height="11"><rect x="0.5" y="0.5" width="9" height="10" fill="#e8e8e8" stroke="#666" stroke-width="0.7"/><line x1="2" y1="3" x2="8" y2="3" stroke="#333"/><line x1="2" y1="5.5" x2="8" y2="5.5" stroke="#3a3"/><line x1="2" y1="8" x2="8" y2="8" stroke="#33c"/></svg>
<svg class="a" style="left:1010px;top:85px" width="12" height="12"><rect x="0.5" y="0.5" width="11" height="11" fill="#fff" stroke="#333" stroke-width="0.8"/><rect x="0.5" y="0.5" width="11" height="2" fill="#3060d0"/><path d="M0.5,5 H11.5 M0.5,7.5 H11.5 M0.5,10 H11.5 M4,2.5 V11.5 M8,2.5 V11.5" stroke="#666" stroke-width="0.6"/></svg>
<div class="a" style="left:211px;top:110px;width:813px;height:6px;background:#e9e9e9;border-top:1px solid #c9c9c9;border-bottom:1px solid #c4c4c4"></div>
<svg class="a" style="left:606px;top:110px" width="24" height="6"><path d="M3,4.5 L6,1 L9,4.5 Z" fill="#888"/><path d="M15,1.5 L21,1.5 L18,5 Z" fill="#888"/></svg>
<div class="a" style="left:1014px;top:116px;width:10px;height:454px;background:#f2f2f2"></div>
<div class="a" style="left:1014px;top:129px;width:10px;height:12px;background:#cdcdcd"></div>
<svg class="a" style="left:1015px;top:118px" width="8" height="6"><path d="M1,4.5 L4,1.5 L7,4.5" fill="none" stroke="#555" stroke-width="1.1"/></svg>
<div class="a" style="left:211px;top:570px;width:813px;height:7px;background:#f3f3f3"></div>
<div class="a" style="left:223px;top:571px;width:26px;height:6px;background:#cdcdcd"></div>
<svg class="a" style="left:214px;top:571px" width="6" height="6"><path d="M4.5,1 L1.5,4 L4.5,7" fill="none" stroke="#555" stroke-width="1.1"/></svg>
<div class="a" style="left:908px;top:556px;width:44px;height:14px;background:#fff;border:1px solid #c8c8c8"></div>
<div class="a" style="left:922px;top:557px;width:1px;height:13px;background:#c8c8c8"></div>
<div class="a" style="left:937px;top:557px;width:1px;height:13px;background:#c8c8c8"></div>
<svg class="a" style="left:910px;top:557px" width="12" height="12"><path d="M3,1.5 L3,10.5 L5,8.5 L7,11.5 L8.5,10.8 L6.6,7.8 L9.5,7.5 Z" fill="#111"/></svg>
<svg class="a" style="left:924px;top:557px" width="12" height="12"><path d="M6,1 V11 M1,6 H11 M6,1 L4.5,2.8 M6,1 L7.5,2.8 M6,11 L4.5,9.2 M6,11 L7.5,9.2 M1,6 L2.8,4.5 M1,6 L2.8,7.5 M11,6 L9.2,4.5 M11,6 L9.2,7.5" stroke="#111" stroke-width="1" fill="none"/></svg>
<svg class="a" style="left:938px;top:557px" width="13" height="13"><circle cx="5.5" cy="5.5" r="3.8" fill="#cfe8f8" stroke="#6a9ac8" stroke-width="1.2"/><line x1="8.3" y1="8.3" x2="11.5" y2="11.5" stroke="#c8a040" stroke-width="2"/></svg>
<div class="a" style="left:966px;top:556px;width:32px;height:14px;background:#ececec;border:1px solid #c8c8c8"></div>
<span id="z100p" class="t" style="left:970.3px;top:559px;font-size:9px;color:#333;transform:scaleX(0.9165);transform-origin:0 50%;">100 %</span>
<div class="a" style="left:998px;top:556px;width:15px;height:14px;background:#f0f0f0;border:1px solid #c8c8c8"></div>
<svg class="a" style="left:999px;top:557px" width="14" height="13"><rect x="1.5" y="4" width="6" height="7" fill="#ddd" stroke="#555" stroke-width="0.8"/><circle cx="7" cy="5.5" r="3.2" fill="#8cc8d8" stroke="#333" stroke-width="1"/><line x1="9.3" y1="7.8" x2="12.5" y2="11" stroke="#222" stroke-width="1.6"/></svg>
<svg class="a" style="left:1015px;top:561px" width="8" height="6"><path d="M1,1.5 L4,4.5 L7,1.5" fill="none" stroke="#555" stroke-width="1.1"/></svg>
</body></html>
